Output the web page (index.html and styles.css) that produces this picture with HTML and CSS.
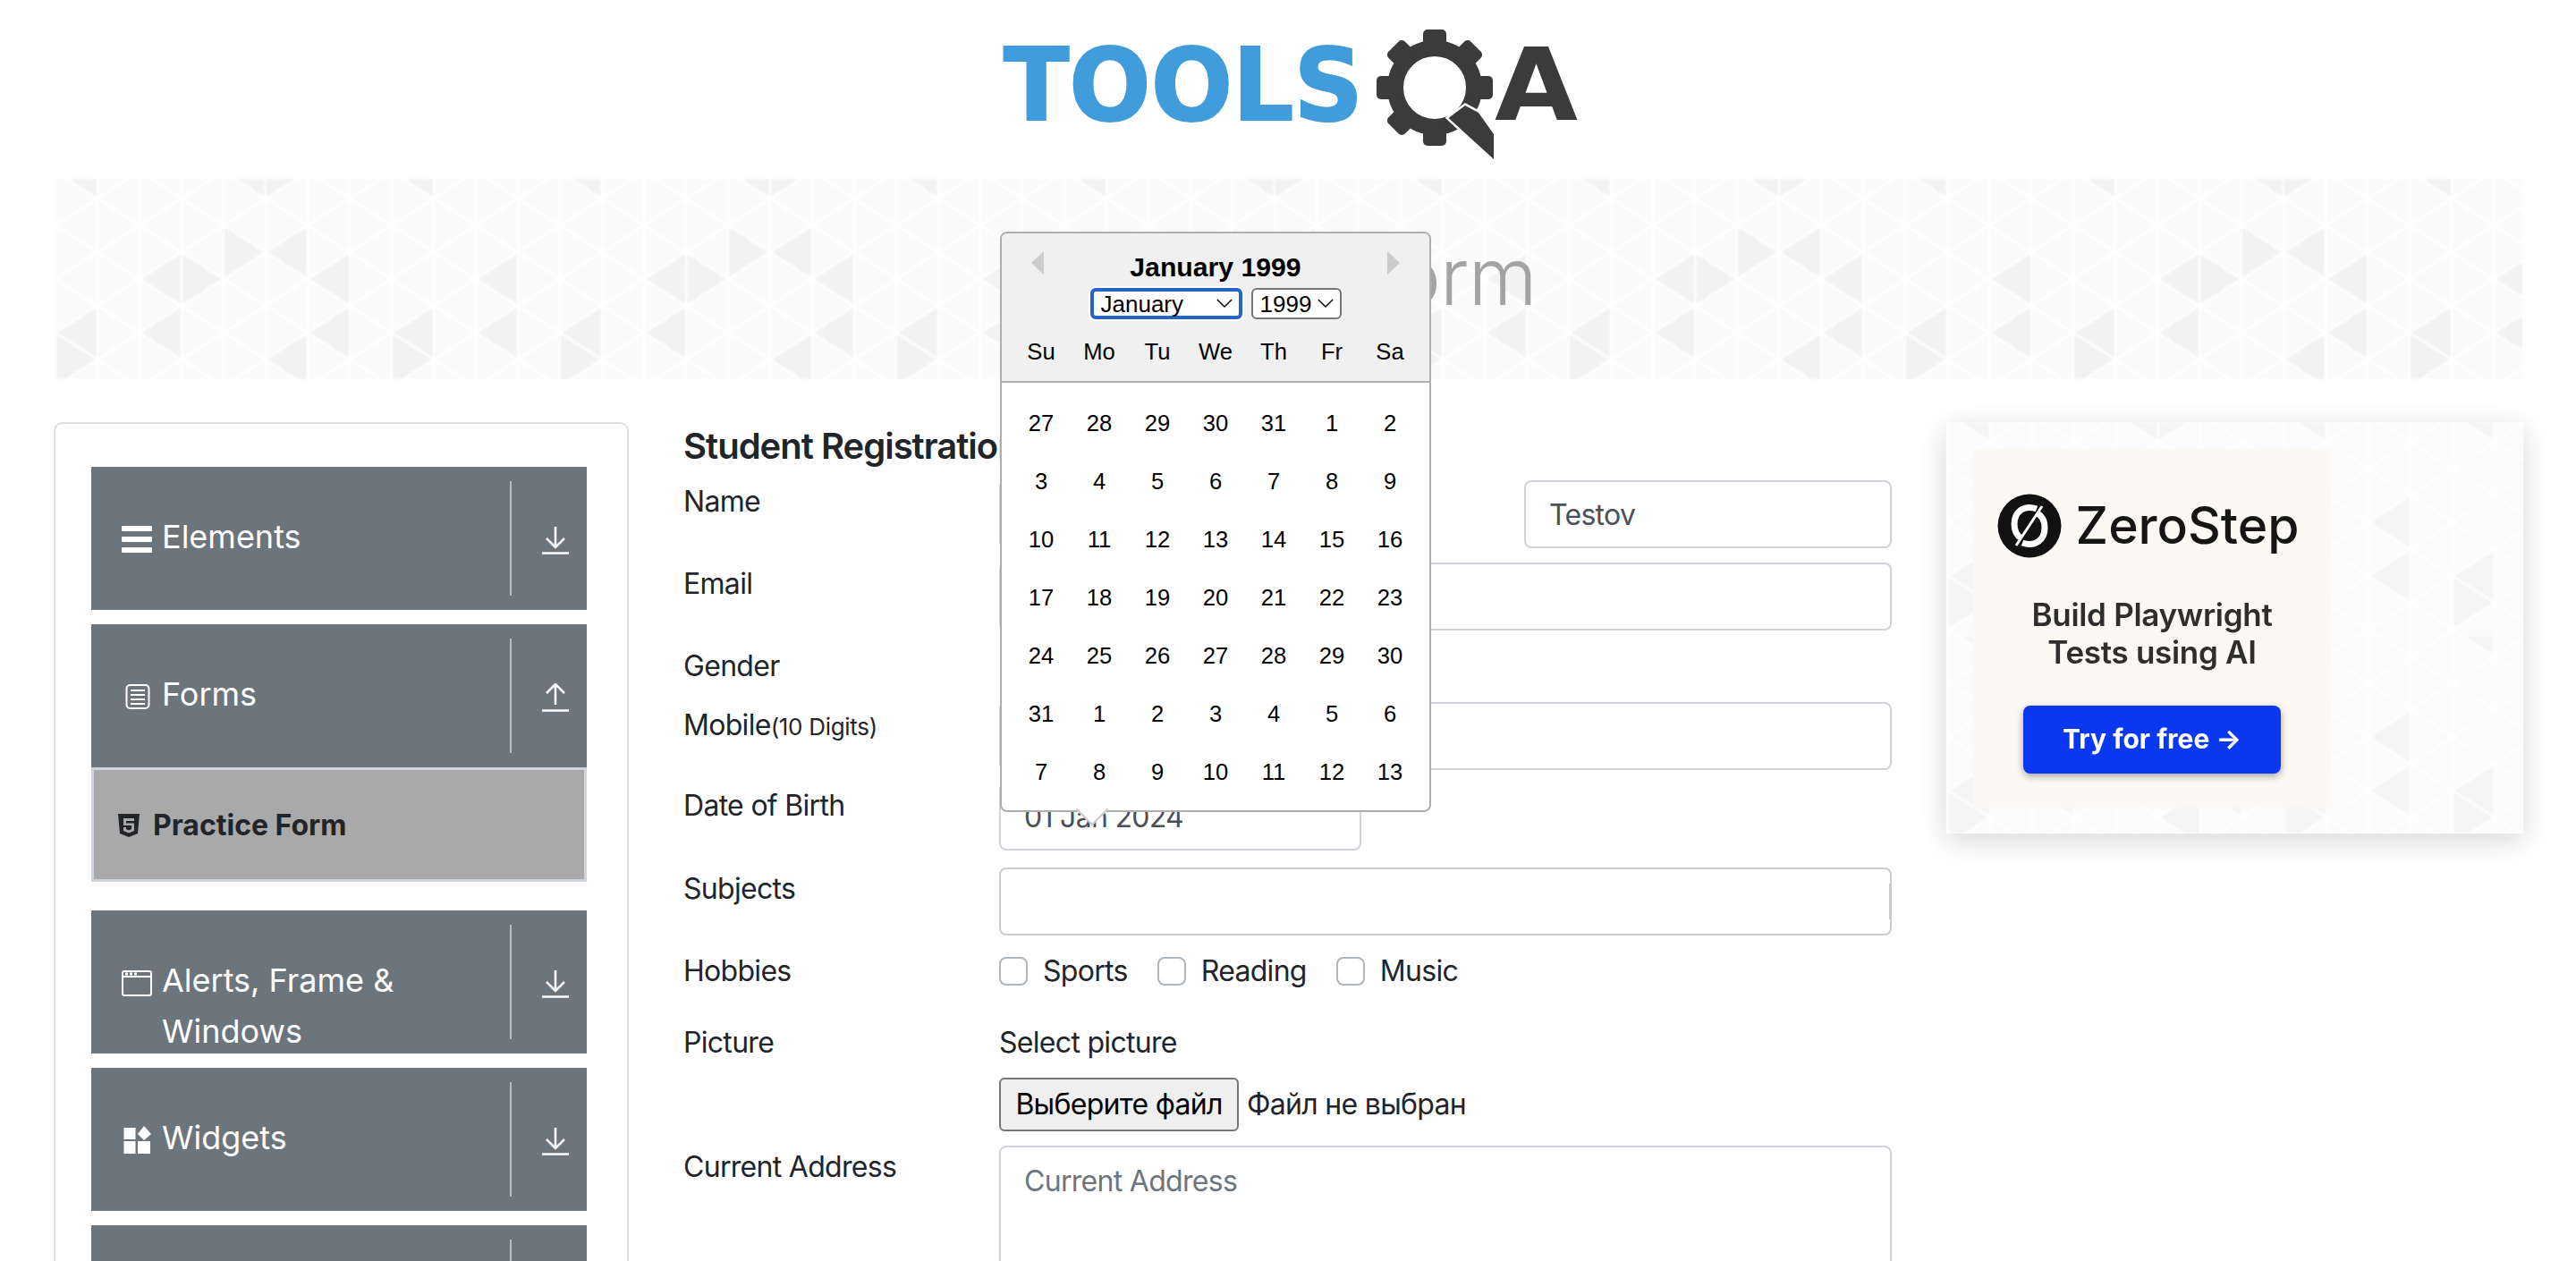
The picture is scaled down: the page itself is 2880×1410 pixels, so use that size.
FILE: index.html
```html
<!DOCTYPE html>
<html lang="en">
<head>
    <meta charset="UTF-8">
    <title>Practice Form</title>
    <link rel="stylesheet" href="styles.css">
</head>
<body>
    <!-- triangle wallpaper, used by the title band and the ad -->
    <svg class="svg-defs" aria-hidden="true">
        <defs>
            <pattern id="tri-dark" patternUnits="userSpaceOnUse" width="564" height="240">
                <g fill="#f2f2f2">
                    <polygon points="49,-38 49,22 2,-8"/>
                    <polygon points="143,82 143,142 96,112"/>
                    <polygon points="143,82 143,142 190,112"/>
                    <polygon points="190,52 190,112 237,82"/>
                    <polygon points="284,52 284,112 237,82"/>
                    <polygon points="331,82 331,142 284,112"/>
                    <polygon points="49,142 49,202 2,172"/>
                    <polygon points="143,142 143,202 96,172"/>
                    <polygon points="331,142 331,202 284,172"/>
                    <polygon points="425,142 425,202 378,172"/>
                    <polygon points="519,82 519,142 472,112"/>
                    <polygon points="519,142 519,202 472,172"/>
                    <polygon points="2,172 2,232 49,202"/>
                    <polygon points="284,172 284,232 237,202"/>
                    <polygon points="378,172 378,232 425,202"/>
                    <polygon points="237,-38 237,22 190,-8"/>
                    <polygon points="237,-38 237,22 284,-8"/>
                    <polygon points="425,-38 425,22 378,-8"/>
                </g>
            </pattern>
            <pattern id="tri-lines" patternUnits="userSpaceOnUse" x="49" y="22" width="94" height="60">
                <path d="M0 0V60M47 0V60M94 0V60M0 0L47 30L94 0M0 60L47 30L94 60" fill="none" stroke="#fff" stroke-width="2.5"/>
            </pattern>
        </defs>
    </svg>

    <header class="top">
        <svg class="logo" viewBox="1110 0 660 200" width="660" height="200" role="img" aria-label="TOOLSQA">
            <text class="logo-tools" x="1122" y="134" textLength="402" lengthAdjust="spacingAndGlyphs">TOOLS</text>
            <g transform="translate(1604 98)" fill="#3b3b3b">
                <circle r="44" fill="none" stroke="#3b3b3b" stroke-width="18"/>
                <rect x="-13" y="-65" width="26" height="24" rx="5"/>
                <rect x="-13" y="-65" width="26" height="24" rx="5" transform="rotate(45)"/>
                <rect x="-13" y="-65" width="26" height="24" rx="5" transform="rotate(90)"/>
                <rect x="-13" y="-65" width="26" height="24" rx="5" transform="rotate(135)"/>
                <rect x="-13" y="-65" width="26" height="24" rx="5" transform="rotate(180)"/>
                <rect x="-13" y="-65" width="26" height="24" rx="5" transform="rotate(225)"/>
                <rect x="-13" y="-65" width="26" height="24" rx="5" transform="rotate(270)"/>
                <rect x="-13" y="-65" width="26" height="24" rx="5" transform="rotate(315)"/>
            </g>
            <polygon points="1638,118 1653,126 1670,150 1670,178 1619.500,132" fill="#3b3b3b" stroke="#fff" stroke-width="5" paint-order="stroke"/>
            <text class="logo-a" x="1671" y="134" textLength="93" lengthAdjust="spacingAndGlyphs">A</text>
        </svg>
    </header>

    <div class="band">
        <svg class="wallpaper" aria-hidden="true"><rect width="100%" height="100%" fill="#fafafa"/><rect width="100%" height="100%" fill="url(#tri-dark)"/><rect width="100%" height="100%" fill="url(#tri-lines)"/></svg>
        <h1 class="band-title">Practice Form</h1>
    </div>

    <div class="main">
        <aside class="sidebar">
            <div class="nav-item">
                <div class="nav-label">
                    <svg class="nav-icon" viewBox="0 0 34 34"><rect y="2" width="34" height="6" rx="1"/><rect y="14" width="34" height="6" rx="1"/><rect y="26" width="34" height="6" rx="1"/></svg>
                    <span class="nav-text">Elements</span>
                </div>
                <div class="nav-side"><svg class="nav-arrow" viewBox="0 0 30 32"><path d="M15 1V24M5 14L15 24L25 14M0 30.500H30"/></svg></div>
            </div>
            <div class="nav-item">
                <div class="nav-label">
                    <svg class="nav-icon" viewBox="0 0 34 34"><rect class="line-icon" x="5.500" y="4" width="25" height="26" rx="4"/><path class="line-icon" d="M10 10H26M10 15H26M10 20H26M10 25H26"/></svg>
                    <span class="nav-text">Forms</span>
                </div>
                <div class="nav-side"><svg class="nav-arrow" viewBox="0 0 30 32"><path d="M15 24V1M5 11L15 1L25 11M0 30.500H30"/></svg></div>
            </div>
            <div class="sub-item">
                <svg class="sub-icon" viewBox="0 0 24 26"><path fill-rule="evenodd" d="M0 0H24L22 22L12 26L2 22ZM6 5V13H15V17L12 18.500L9 17V15H6V19L12 21.500L18 19V10.500H9V8H18V5Z"/></svg>
                <span>Practice Form</span>
            </div>
            <div class="nav-item">
                <div class="nav-label">
                    <svg class="nav-icon" viewBox="0 0 34 34"><rect class="line-icon" x="1" y="4" width="32" height="27" rx="2"/><path class="line-icon" d="M1 10H33"/><rect x="4" y="5.500" width="3" height="3"/><rect x="9" y="5.500" width="3" height="3"/><rect x="14" y="5.500" width="3" height="3"/></svg>
                    <span class="nav-text">Alerts, Frame &amp; Windows</span>
                </div>
                <div class="nav-side"><svg class="nav-arrow" viewBox="0 0 30 32"><path d="M15 1V24M5 14L15 24L25 14M0 30.500H30"/></svg></div>
            </div>
            <div class="nav-item">
                <div class="nav-label">
                    <svg class="nav-icon" viewBox="0 0 34 34"><rect x="2.500" y="3" width="13" height="13"/><polygon points="25,1 33,10 25,17 18,10"/><rect x="2.500" y="18" width="13" height="14"/><rect x="18" y="18" width="14" height="14"/></svg>
                    <span class="nav-text">Widgets</span>
                </div>
                <div class="nav-side"><svg class="nav-arrow" viewBox="0 0 30 32"><path d="M15 1V24M5 14L15 24L25 14M0 30.500H30"/></svg></div>
            </div>
            <div class="nav-item">
                <div class="nav-label"></div>
                <div class="nav-side"></div>
            </div>
        </aside>

        <section class="form-col">
            <h5 class="form-title">Student Registration Form</h5>
            <div class="row">
                <label class="lbl">Name</label>
                <div class="pair">
                    <input class="field" type="text">
                    <input class="field" type="text" value="Testov">
                </div>
            </div>
            <div class="row">
                <label class="lbl">Email</label>
                <input class="field" type="text">
            </div>
            <div class="row">
                <label class="lbl">Gender</label>
            </div>
            <div class="row row-mobile">
                <label class="lbl lbl-nudge">Mobile<small class="hint">(10 Digits)</small></label>
                <input class="field" type="text">
            </div>
            <div class="row row-dob">
                <label class="lbl lbl-nudge">Date of Birth</label>
                <input class="field field-date" type="text" value="01 Jan 2024">
            </div>
            <div class="row">
                <label class="lbl">Subjects</label>
                <div class="subjects"></div>
            </div>
            <div class="row row-hobbies">
                <label class="lbl">Hobbies</label>
                <div class="checks">
                    <label class="check"><span class="box"></span>Sports</label>
                    <label class="check"><span class="box"></span>Reading</label>
                    <label class="check"><span class="box"></span>Music</label>
                </div>
            </div>
            <div class="row">
                <label class="lbl">Picture</label>
                <div>
                    <div class="lbl">Select picture</div>
                    <div class="file">
                        <button class="file-btn" type="button">Выберите файл</button>
                        <span>Файл не выбран</span>
                    </div>
                </div>
            </div>
            <div class="row">
                <label class="lbl">Current Address</label>
                <textarea class="field address" placeholder="Current Address"></textarea>
            </div>
        </section>

        <aside class="ad">
            <svg class="wallpaper wallpaper-light" aria-hidden="true"><rect width="100%" height="100%" fill="#fafafa"/><rect width="100%" height="100%" fill="url(#tri-dark)"/><rect width="100%" height="100%" fill="url(#tri-lines)"/></svg>
            <div class="ad-card">
                <div class="ad-brand">
                    <svg class="ad-logo" viewBox="0 0 72 72">
                        <circle cx="36" cy="36" r="35.500" fill="#111"/>
                        <path d="M44 17C30 12 19 20 19 34C19 42 22 47 27 50M28 55C42 60 53 52 53 38C53 30 50 25 45 22" fill="none" stroke="#fff" stroke-width="7"/>
                        <path d="M50 14L21 58" stroke="#fff" stroke-width="3"/>
                    </svg>
                    <span>ZeroStep</span>
                </div>
                <p class="ad-copy">Build Playwright<br>Tests using AI</p>
                <div class="ad-btn">Try for free →</div>
            </div>
        </aside>
    </div>

    <!-- date picker popup, open over the form -->
    <div class="picker">
        <div class="picker-head">
            <span class="nav-prev"></span>
            <span class="nav-next"></span>
            <div class="picker-month">January 1999</div>
            <div class="picker-selects">
                <span class="sel sel-month">January<svg viewBox="0 0 20 12"><path d="M1 1L10 10L19 1"/></svg></span>
                <span class="sel sel-year">1999<svg viewBox="0 0 20 12"><path d="M1 1L10 10L19 1"/></svg></span>
            </div>
            <div class="picker-days">
                <span>Su</span><span>Mo</span><span>Tu</span><span>We</span><span>Th</span><span>Fr</span><span>Sa</span>
            </div>
        </div>
        <div class="picker-grid">
            <span>27</span><span>28</span><span>29</span><span>30</span><span>31</span><span>1</span><span>2</span>
            <span>3</span><span>4</span><span>5</span><span>6</span><span>7</span><span>8</span><span>9</span>
            <span>10</span><span>11</span><span>12</span><span>13</span><span>14</span><span>15</span><span>16</span>
            <span>17</span><span>18</span><span>19</span><span>20</span><span>21</span><span>22</span><span>23</span>
            <span>24</span><span>25</span><span>26</span><span>27</span><span>28</span><span>29</span><span>30</span>
            <span>31</span><span>1</span><span>2</span><span>3</span><span>4</span><span>5</span><span>6</span>
            <span>7</span><span>8</span><span>9</span><span>10</span><span>11</span><span>12</span><span>13</span>
        </div>
    </div>
</body>
</html>
```

FILE: styles.css
```css
* {
    box-sizing: border-box;
}
html, body {
    margin: 0;
    height: 1410px;
    overflow: hidden;
}
body {
    position: relative;
    background: #fff;
    color: #212529;
    font-family: Inter, "Noto Sans", sans-serif;
    font-size: 32px;
    line-height: 48px;
}
.svg-defs {
    position: absolute;
    width: 0;
    height: 0;
}

/* logo */
.top {
    display: flex;
    justify-content: center;
    height: 200px;
}
.logo {
    display: block;
}
.logo-tools {
    font-family: "DejaVu Sans", sans-serif;
    font-weight: 700;
    font-size: 112px;
    fill: #409cdb;
    stroke: #409cdb;
    stroke-width: 2;
}
.logo-a {
    font-family: "DejaVu Sans", sans-serif;
    font-weight: 700;
    font-size: 112px;
    fill: #3b3b3b;
}

/* title band */
.band {
    position: relative;
    display: flex;
    justify-content: center;
    align-items: center;
    height: 224px;
    margin: 0 60px;
    padding-bottom: 6px;
}
.wallpaper {
    position: absolute;
    left: 0;
    top: 0;
    width: 100%;
    height: 100%;
    filter: blur(1px);
}
.wallpaper-light {
    opacity: .75;
}
.band-title {
    position: relative;
    margin: 0;
    font-size: 88px;
    font-weight: 300;
    letter-spacing: -.8px;
    line-height: 120px;
    color: #a3a3a3;
}

/* columns */
.main {
    display: flex;
    align-items: flex-start;
    margin: 48px 60px 0;
}
.sidebar {
    flex: none;
    width: 643px;
    height: 1200px;
    padding: 48px 45px 0 40px;
    border: 2px solid #dfdfdf;
    border-radius: 10px;
}
.nav-item {
    display: flex;
    height: 160px;
    margin-bottom: 16px;
    overflow: hidden;
    background: #6c747c;
    color: #fff;
}
.nav-label {
    flex: 1;
    display: flex;
    align-items: flex-start;
    padding: 50px 0 0 34px;
}
.nav-icon {
    flex: none;
    width: 34px;
    height: 34px;
    margin: 14px 11px 0 0;
    fill: #fff;
}
.line-icon {
    fill: none;
    stroke: #fff;
    stroke-width: 2;
}
.nav-text {
    width: 360px;
    font-size: 36px;
    line-height: 57px;
}
.nav-side {
    flex: none;
    width: 86px;
    height: 128px;
    margin-top: 16px;
    padding: 50px 0 0 34px;
    border-left: 2px solid #b9bcc0;
}
.nav-arrow {
    display: block;
    width: 30px;
    height: 32px;
    fill: none;
    stroke: #fff;
    stroke-width: 2.5;
}
.sub-item {
    display: flex;
    align-items: center;
    height: 128px;
    margin: -16px 0 32px;
    padding: 2px 0 0 27px;
    background: #a9a9a9;
    border: 3px solid #ced4da;
    font-weight: 700;
}
.sub-icon {
    width: 24px;
    height: 26px;
    margin-right: 15px;
    fill: #212529;
}

/* form */
.form-col {
    flex: none;
    width: 1351px;
    margin-left: 61px;
    letter-spacing: -.7px;
}
.form-title {
    margin: 3px 0 14px;
    font-size: 40px;
    font-weight: 600;
    letter-spacing: -1px;
    line-height: 48px;
    white-space: nowrap;
}
.row {
    display: grid;
    grid-template-columns: 353px 1fr;
    margin-bottom: 16px;
}
.row-mobile {
    margin-bottom: 14px;
}
.row-dob {
    margin-bottom: 19px;
}
.row-hobbies {
    margin-bottom: 32px;
}
.lbl {
    display: block;
    line-height: 48px;
}
.lbl-nudge {
    padding-top: 2px;
}
.hint {
    font-size: 26px;
    letter-spacing: -.3px;
}
.pair {
    display: grid;
    grid-template-columns: 470px 411px;
    justify-content: space-between;
}
.field {
    display: block;
    width: 100%;
    height: 76px;
    padding: 0 26px;
    border: 2px solid #ced4da;
    border-radius: 8px;
    background: #fff;
    color: #495057;
    font: inherit;
    letter-spacing: inherit;
}
.field-date {
    width: 405px;
}
.subjects {
    position: relative;
    height: 76px;
    border: 2px solid #ccc;
    border-radius: 8px;
}
.subjects::after {
    content: "";
    position: absolute;
    right: -2px;
    top: 16px;
    width: 3px;
    height: 40px;
    background: #ccc;
}
.checks {
    display: flex;
    align-items: center;
    gap: 33px;
}
.check {
    display: flex;
    align-items: center;
    gap: 17px;
}
.box {
    width: 32px;
    height: 32px;
    border: 2px solid #adb5bd;
    border-radius: 8px;
    background: #fff;
}
.file {
    display: flex;
    align-items: center;
    gap: 9px;
    margin-top: 15px;
}
.file-btn {
    width: 268px;
    height: 60px;
    padding: 0;
    border: 2px solid #767676;
    border-radius: 6px;
    background: #efefef;
    color: #000;
    font: inherit;
    letter-spacing: inherit;
}
.address {
    height: 400px;
    padding-top: 14px;
    resize: none;
}
.address::placeholder {
    color: #6c757d;
}

/* ad */
.ad {
    position: relative;
    flex: none;
    width: 645px;
    height: 460px;
    margin-left: 61px;
    box-shadow: 0 8px 30px rgba(0, 0, 0, .16);
}
.ad-card {
    position: relative;
    display: flex;
    flex-direction: column;
    align-items: center;
    width: 400px;
    height: 401px;
    margin: 30px 0 0 30px;
    padding-top: 50px;
    background: #fcf8f3;
    filter: blur(.6px);
}
.ad-brand {
    display: flex;
    align-items: center;
    gap: 16px;
    padding-right: 9px;
    color: #151515;
    font-size: 57px;
    font-weight: 500;
    line-height: 72px;
}
.ad-logo {
    width: 72px;
    height: 72px;
}
.ad-copy {
    margin: 42px 0 0;
    color: #2e2e2e;
    font-size: 35px;
    font-weight: 600;
    letter-spacing: -.3px;
    line-height: 42px;
    text-align: center;
}
.ad-btn {
    display: flex;
    justify-content: center;
    align-items: center;
    width: 288px;
    height: 76px;
    margin-top: 39px;
    padding-bottom: 2px;
    border-radius: 8px;
    background: #0a38f0;
    box-shadow: 0 3px 8px rgba(0, 0, 0, .35);
    color: #fff;
    font-size: 30px;
    font-weight: 700;
}

/* date picker */
.picker {
    position: absolute;
    left: 1118px;
    top: 259px;
    width: 482px;
    height: 649px;
    border: 2px solid #aeaeae;
    border-radius: 8px;
    background: #fff;
    color: #000;
    font-family: "Liberation Sans", Arial, sans-serif;
    font-size: 25.6px;
}
.picker::after {
    content: "";
    position: absolute;
    left: 88px;
    bottom: -12px;
    width: 24px;
    height: 24px;
    background: #fff;
    border-right: 2px solid #c8c8c8;
    border-bottom: 2px solid #c8c8c8;
    transform: rotate(45deg);
}
.picker-head {
    position: relative;
    height: 167px;
    padding-top: 20px;
    border-bottom: 2px solid #aeaeae;
    border-radius: 6px 6px 0 0;
    background: #f0f0f0;
}
.nav-prev, .nav-next {
    position: absolute;
    top: 20px;
    width: 0;
    height: 0;
    border-top: 13px solid transparent;
    border-bottom: 13px solid transparent;
}
.nav-prev {
    left: 33px;
    border-right: 14px solid #ccc;
}
.nav-next {
    left: 431px;
    border-left: 14px solid #ccc;
}
.picker-month {
    font-size: 30.200px;
    font-weight: 700;
    line-height: 36px;
    text-align: center;
}
.picker-selects {
    display: flex;
    justify-content: center;
    gap: 10px;
    margin-top: 5px;
}
.sel {
    display: flex;
    justify-content: space-between;
    align-items: center;
    height: 35px;
    padding: 0 7px 0 8px;
    border: 2px solid #767676;
    border-radius: 6px;
    background: #fff;
    font-size: 26px;
    line-height: 30px;
}
.sel svg {
    width: 18px;
    height: 11px;
    fill: none;
    stroke: #000;
    stroke-width: 1.600;
}
.sel-month {
    width: 170px;
    border: 4px solid #2563c8;
    box-shadow: 0 0 0 2px #fff;
}
.sel-year {
    width: 101px;
}
.picker-days, .picker-grid {
    display: grid;
    grid-template-columns: repeat(7, 65px);
    justify-content: center;
}
.picker-days {
    margin-top: 16px;
    line-height: 40px;
    text-align: center;
}
.picker-grid {
    grid-auto-rows: 65px;
    padding-top: 12px;
}
.picker-grid span {
    display: flex;
    justify-content: center;
    align-items: center;
}
```
